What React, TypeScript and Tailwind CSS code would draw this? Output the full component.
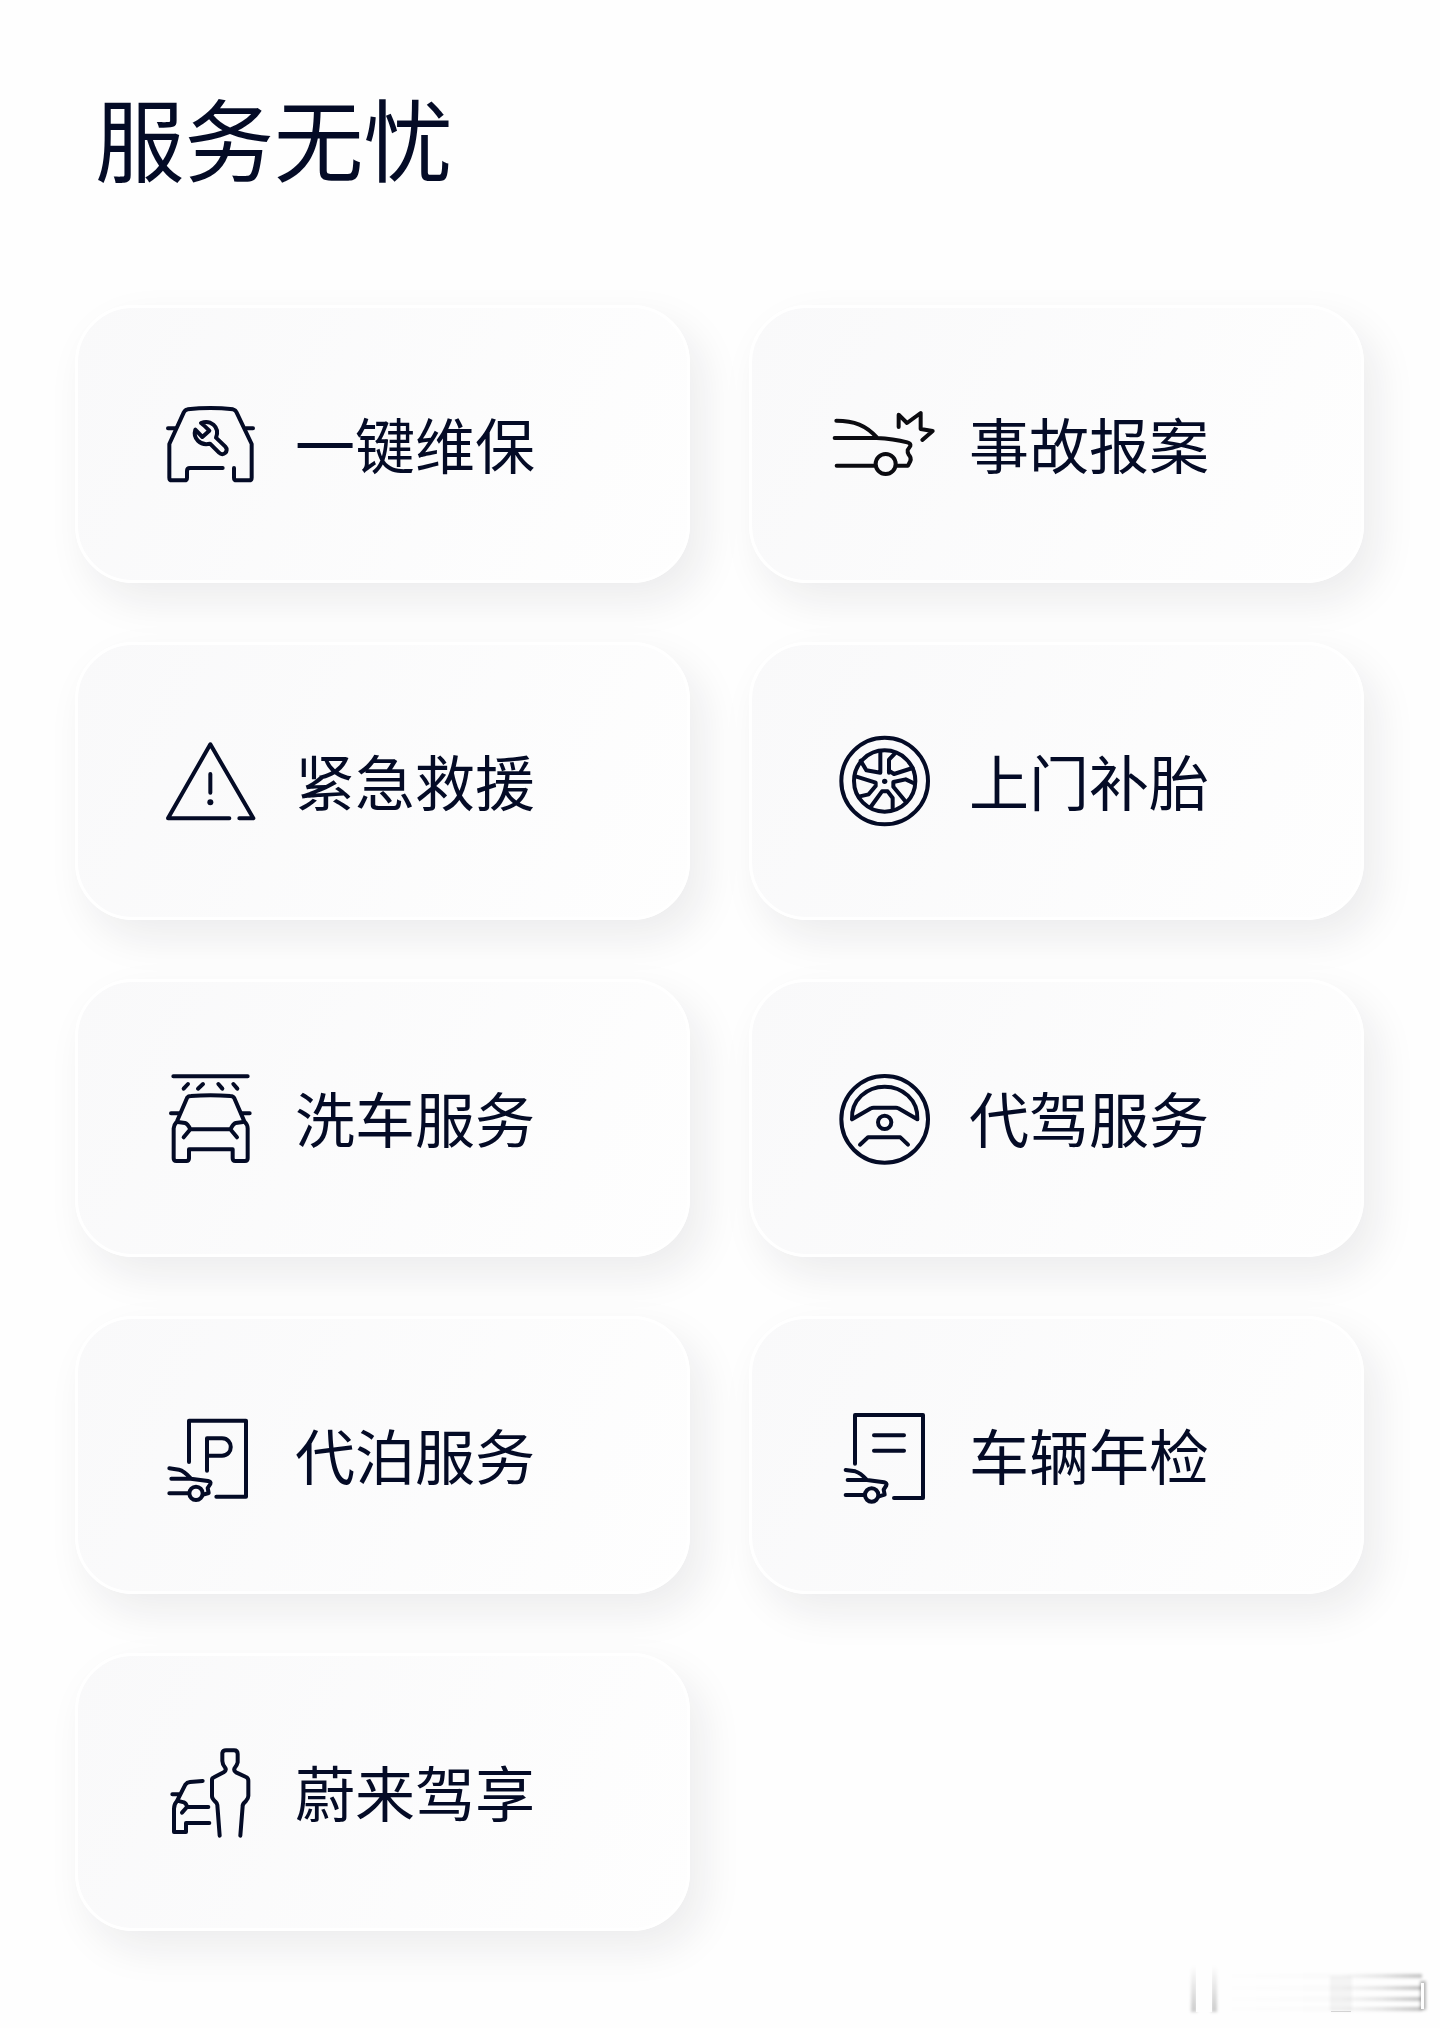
import type { ReactNode } from "react";

type Service = {
  label: string;
  viewBox: string;
  icon: ReactNode;
  tone?: string;
};

const services: Service[] = [
  {
    label: "一键维保",
    viewBox: "0 -18 360 360",
    icon: (
      <>
        <path d="M218 234H120Q111 234 111 243V263Q111 271 103 271H66Q58 271 58 263V162L101 68Q104 60 113 58Q181 50 249 58Q257 60 260 68L305 162V263Q305 271 297 271H260Q252 271 252 263V234" />
        <path d="M54 115H76M309 115H288" />
        <path d="M153 99Q161 105 178 122L157 141L136 119C128 145 150 168 180 161L207 188C220 201 238 183 226 170L198 143C211 110 180 88 153 99Z" />
      </>
    ),
  },
  {
    label: "事故报案",
    viewBox: "12 -18 360 360",
    tone: "text-[#0b0b10]",
    icon: (
      <>
        <path d="M49 92C102 92 139 106 171 143M44 144H170Q220 146 262 157Q273 160 271 168L263 180Q262 186 266 194Q275 203 271 213L264 227H230M50 227H164" />
        <circle cx="197" cy="222" r="30" />
        <path d="M236 111V74L261 99L302 69V117L338 123L307 150" />
      </>
    ),
  },
  {
    label: "紧急救援",
    viewBox: "0 -27 360 360",
    icon: (
      <>
        <path d="M238 265H54L181 43L310 265H268M181 132V188" />
        <circle cx="181" cy="217" r="9" fill="currentColor" stroke="none" />
      </>
    ),
  },
  {
    label: "上门补胎",
    viewBox: "-3 -12 360 360",
    icon: (
      <>
        <circle cx="179" cy="168" r="130" />
        <circle cx="179" cy="168" r="92" />
        <path d="M166 78V143L124 136L107 107M192 143V104L210 85M192 137L207 147L263 129M92 154L152 173V183L131 208L101 215M265 174L242 163L205 171V185L243 231M137 246L171 199H188L203 219V255" />
        <circle cx="179" cy="169" r="8" fill="currentColor" stroke="none" />
      </>
    ),
  },
  {
    label: "洗车服务",
    viewBox: "-15 -6 360 360",
    icon: (
      <>
        <path d="M55 49H278M99 72L86 86M144 72L129 86M190 72L202 86M235 72L247 86" />
        <path d="M97 112Q100 108 108 108Q166 104 226 108Q235 108 238 115L268 184Q278 194 278 205V295Q278 303 270 303H241Q233 303 233 295V268H102V295Q102 303 94 303H64Q56 303 56 295V205Q57 194 66 184Z" />
        <path d="M48 160H72M284 160H260M68 186L90 189Q98 191 106 208L86 232M264 186L242 189Q235 191 226 208L246 232M106 208H226" />
      </>
    ),
  },
  {
    label: "代驾服务",
    viewBox: "-3 -6 360 360",
    icon: (
      <>
        <circle cx="179" cy="178" r="130" />
        <circle cx="179" cy="187" r="20" />
        <path d="M81 178C78 119 126 80 179 80S280 119 277 178L220 145Q217 143 213 143H146Q141 143 138 145ZM105 254L129 232H226L249 254" />
      </>
    ),
  },
  {
    label: "代泊服务",
    viewBox: "-15 -15 360 360",
    icon: (
      <>
        <path d="M102 186V62H273V290H184M156 212V115H201C236 115 236 167 201 167H156" />
        <path d="M43 205L72 209Q87 212 107 235M49 236H107L159 243Q169 245 166 252L158 264L161 279L145 284M43 280H101" />
        <circle cx="123" cy="280" r="20" />
      </>
    ),
  },
  {
    label: "车辆年检",
    viewBox: "-3 -15 360 360",
    icon: (
      <>
        <path d="M90 191V45H294V294H207M147 106H237M147 152H237" />
        <path d="M62 210L91 214Q106 218 126 240M68 240H126L177 247Q187 249 184 256L176 269L179 284L162 289M62 285H119" />
        <circle cx="140" cy="285" r="20" />
      </>
    ),
  },
  {
    label: "蔚来驾享",
    viewBox: "-15 -9 360 360",
    icon: (
      <>
        <path d="M194 302L187 210Q186 204 181 200Q171 191 171 184V134Q171 129 177 127L206 112Q215 106 211 99Q202 88 202 78V54Q204 46 213 46H237Q248 46 248 57V82Q246 91 239 99Q235 107 243 112L273 126Q280 129 280 137V183Q280 190 272 199Q263 206 263 213L256 302" />
        <path d="M143 138L105 141Q96 142 91 149L66 198Q57 208 57 221V291H93V264H163M52 178H74M66 197L87 202Q94 205 96 216L81 233M96 216H160" />
      </>
    ),
  },
];

function ServiceCard({ label, viewBox, icon, tone = "text-[#040b26]" }: Service) {
  return (
    <button className="flex h-[278px] w-[615px] items-center rounded-[58px] border-3 border-white bg-linear-[114deg,#f9f9fa,#fefefe] pl-[72px] shadow-[13px_18px_42px_rgba(20,22,36,0.08)]">
      <svg
        className={`size-[120px] shrink-0 ${tone}`}
        viewBox={viewBox}
        fill="none"
        stroke="currentColor"
        strokeWidth={12}
        strokeLinecap="round"
        strokeLinejoin="round"
      >
        {icon}
      </svg>
      <span className="-mt-[2px] ml-[25px] text-[60px] leading-[88px] whitespace-nowrap">{label}</span>
    </button>
  );
}

function CornerMark() {
  return (
    <svg className="absolute right-0 bottom-0 h-[88px] w-[270px]" viewBox="0 0 270 88" fill="none">
      <defs>
        <linearGradient id="fade" x1="0" x2="0" y1="0" y2="1">
          <stop offset="0" stopColor="#000" stopOpacity="0" />
          <stop offset="1" stopColor="#000" stopOpacity="0.2" />
        </linearGradient>
        <linearGradient id="streak" x1="0" x2="1" y1="0" y2="0">
          <stop offset="0" stopColor="#000" stopOpacity="0" />
          <stop offset="0.6" stopColor="#000" stopOpacity="0.02" />
          <stop offset="0.8" stopColor="#000" stopOpacity="0.1" />
          <stop offset="1" stopColor="#000" stopOpacity="0.24" />
        </linearGradient>
        <filter id="soft" x="-50%" y="-50%" width="200%" height="200%">
          <feGaussianBlur stdDeviation="1.8" />
        </filter>
      </defs>
      <g filter="url(#soft)">
        <rect x="21" y="26" width="6" height="46" fill="url(#fade)" />
        <rect x="41" y="26" width="6" height="46" fill="url(#fade)" />
        <rect x="160" y="36" width="22" height="35" fill="#000" fillOpacity="0.04" />
        <rect x="50" y="34" width="202" height="4" fill="url(#streak)" />
        <rect x="50" y="46" width="202" height="4" fill="url(#streak)" />
        <rect x="50" y="57" width="202" height="4" fill="url(#streak)" />
        <rect x="50" y="67" width="202" height="4" fill="url(#streak)" />
        <rect x="250" y="41" width="6" height="29" fill="#000" fillOpacity="0.28" />
      </g>
      <rect x="26" y="26" width="16" height="46" fill="#fefefe" />
      <rect x="161" y="71" width="20" height="1" fill="#000" fillOpacity="0.15" />
      <rect x="251" y="43" width="3" height="26" fill="#fff" />
    </svg>
  );
}

export default function App() {
  return (
    <main className="relative h-[2028px] w-[1440px] overflow-hidden bg-[#fefefe] pt-[72px] pl-[75px] font-['Noto_Sans_CJK_SC',sans-serif] text-[#040b26]">
      <h1 className="pl-[20px] text-[89.5px] leading-[128px]">服务无忧</h1>
      <div className="mt-[105px] grid grid-cols-[615px_615px] gap-x-[59px] gap-y-[59px]">
        {services.map((service) => (
          <ServiceCard key={service.label} {...service} />
        ))}
      </div>
      <CornerMark />
    </main>
  );
}
